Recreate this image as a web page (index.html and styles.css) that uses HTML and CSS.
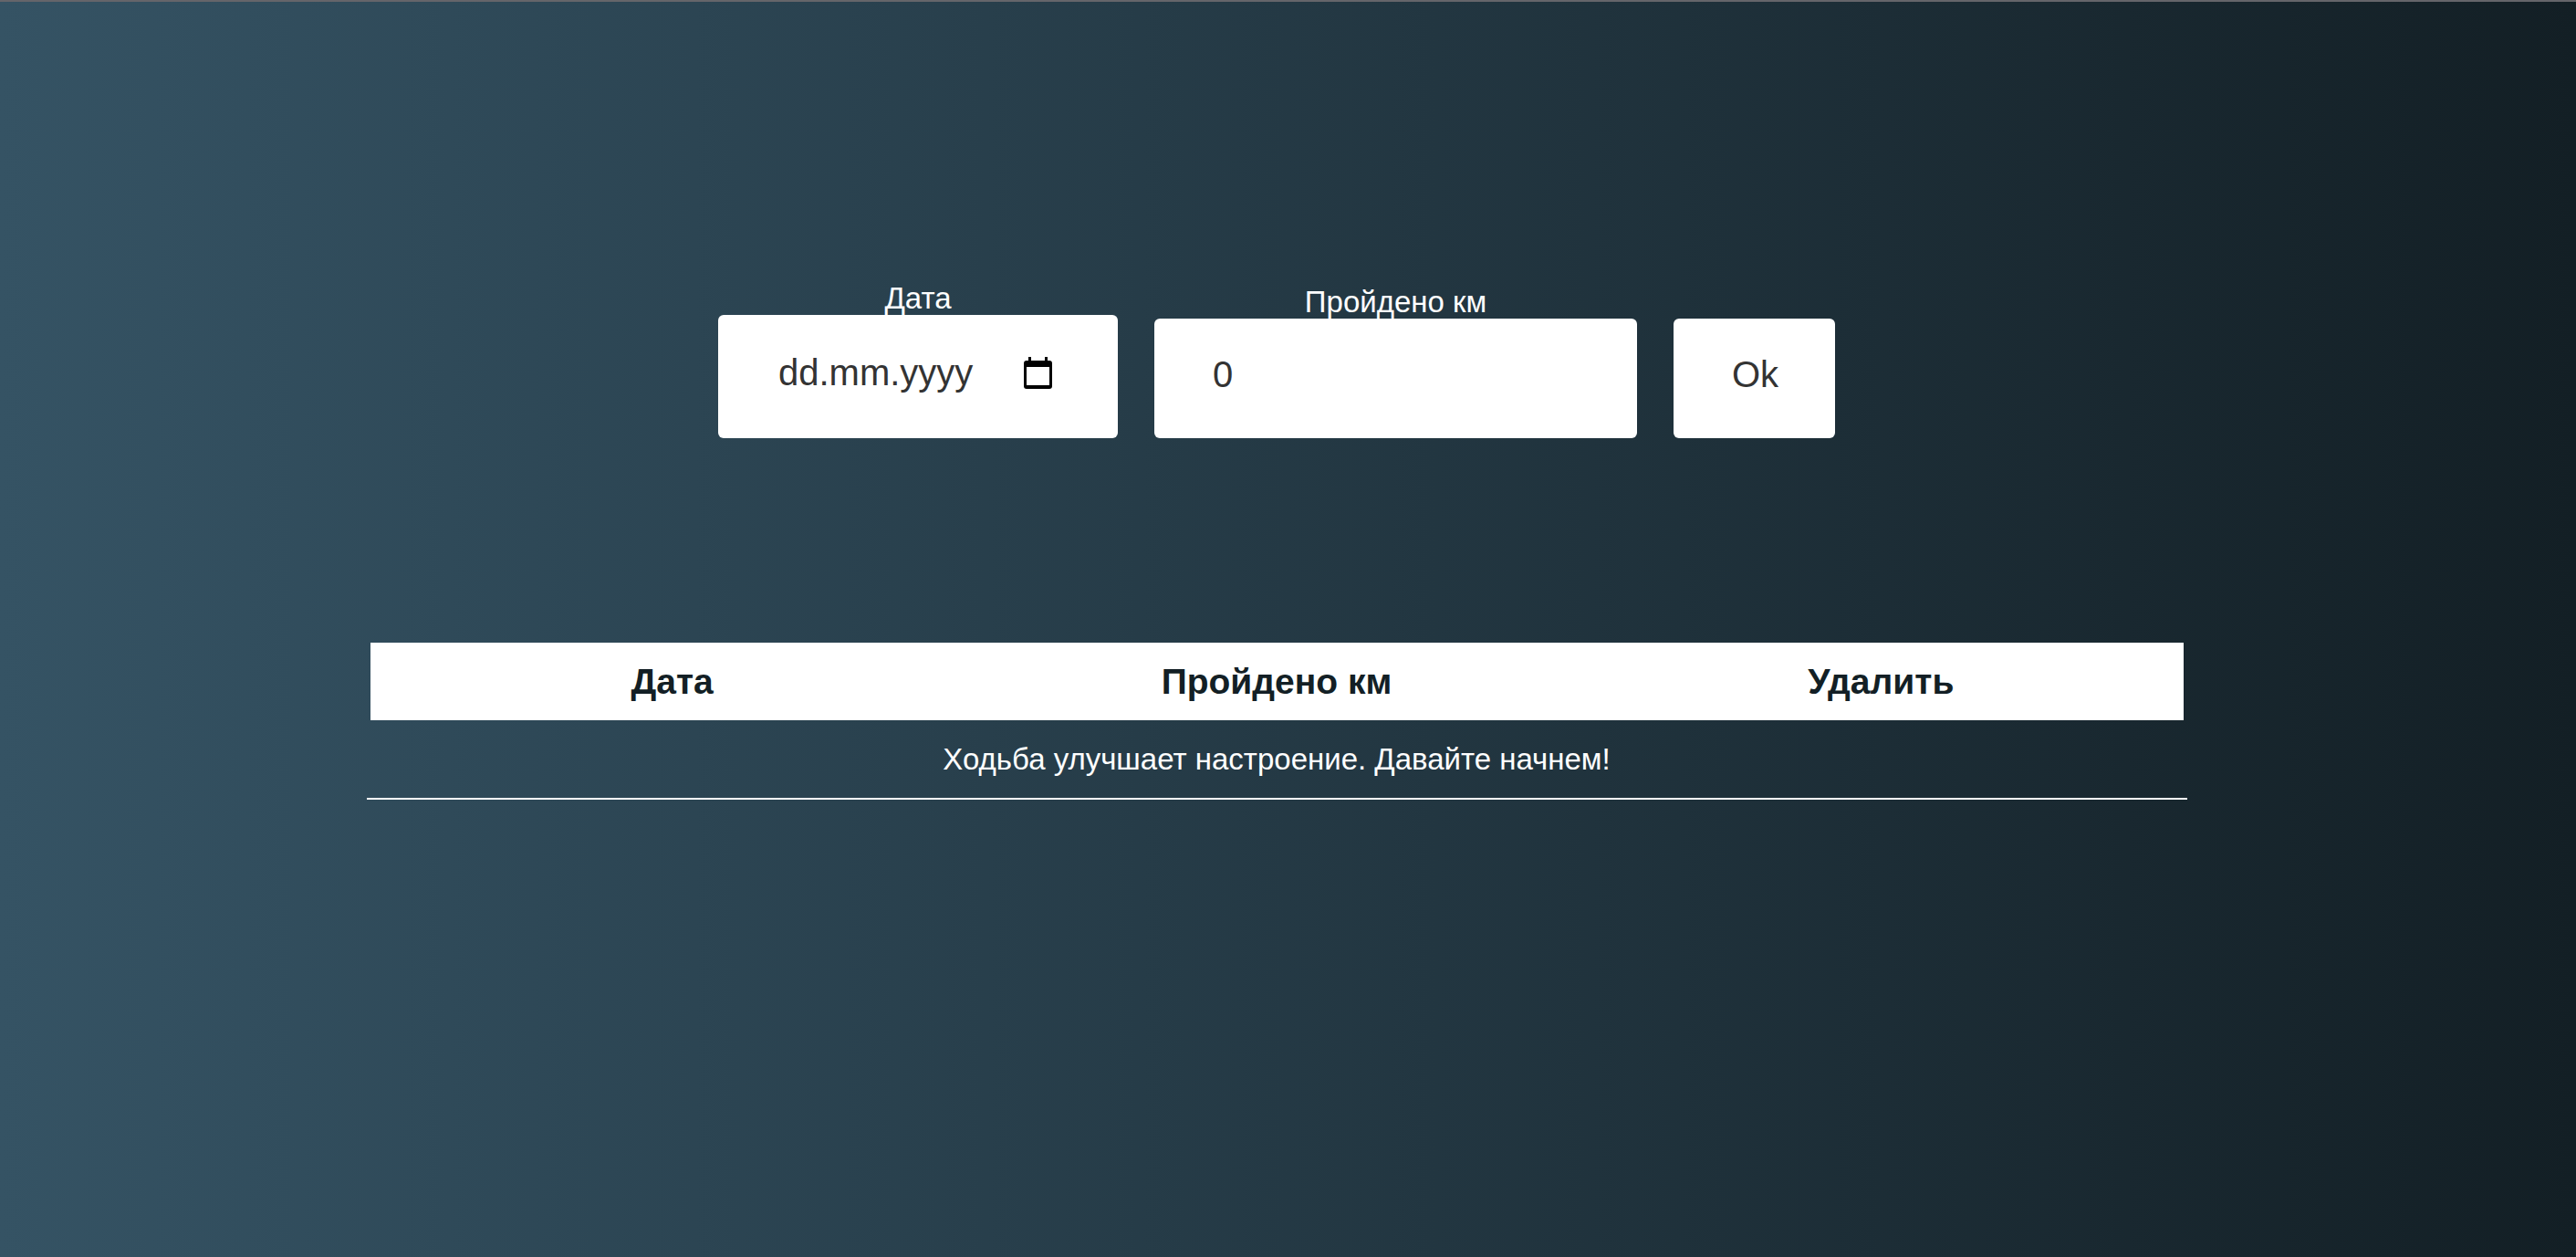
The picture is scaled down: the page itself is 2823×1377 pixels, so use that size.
FILE: index.html
```html
<!DOCTYPE html>
<html lang="ru">
<head>
<meta charset="utf-8">
<meta name="viewport" content="width=device-width, initial-scale=1">
<title>Учёт тренировок</title>
<link rel="stylesheet" href="styles.css">
</head>
<body>
<main class="page">
  <form class="form">
    <div class="field field-date">
      <label class="label" for="date">Дата</label>
      <div class="control control-date">
        <input class="input input-date" id="date" type="text" inputmode="numeric" placeholder="dd.mm.yyyy">
        <button class="calendar" type="button" aria-label="Календарь">
          <svg class="calendar-icon" viewBox="0 0 31 35" aria-hidden="true">
            <path fill-rule="evenodd" d="M5 0h3v4h15V0h3v4h2a3 3 0 0 1 3 3v25a3 3 0 0 1-3 3H3a3 3 0 0 1-3-3V7a3 3 0 0 1 3-3h2zM3 11v20h25V11z"/>
          </svg>
        </button>
      </div>
    </div>
    <div class="field field-distance">
      <label class="label" for="distance">Пройдено км</label>
      <input class="control input" id="distance" type="text" inputmode="decimal" value="0">
    </div>
    <button class="control submit" type="submit">Ok</button>
  </form>
  <table class="table">
    <thead>
      <tr class="head-row">
        <th>Дата</th>
        <th>Пройдено км</th>
        <th>Удалить</th>
      </tr>
    </thead>
    <tbody>
      <tr>
        <td colspan="3">Ходьба улучшает настроение. Давайте начнем!</td>
      </tr>
    </tbody>
  </table>
</main>
</body>
</html>
```
FILE: styles.css
```css
* {
  box-sizing: border-box;
}

body {
  margin: 0;
  min-height: 100vh;
  border-top: 2px solid #65656a;
  background: linear-gradient(90deg, #355364, #131f25);
  color: #fff;
  font-family: "Liberation Sans", Arial, sans-serif;
  font-size: 33px;
  line-height: 37px;
}

.page {
  display: flex;
  flex-direction: column;
  align-items: center;
  gap: 220px;
  padding: 306px 25px 40px 0;
}

.form {
  display: flex;
  align-items: flex-end;
  justify-content: center;
  gap: 40px;
}

.field {
  display: flex;
  flex-direction: column;
}

.field-date {
  width: 438px;
}

.field-distance {
  width: 529px;
}

.label {
  text-align: center;
}

.control {
  padding: 38px 64px 47px;
  border: 0;
  border-radius: 6px;
  background: #fff;
}

.control-date {
  display: flex;
  align-items: center;
  justify-content: space-between;
  padding: 40px 72px 49px 66px;
}

.input,
.submit {
  color: #333;
  font-family: inherit;
  font-size: 40px;
  line-height: 46px;
}

.input {
  width: 100%;
  height: auto;
  outline: 0;
}

.input-date {
  width: 220px;
  height: 46px;
  padding: 0;
  border: 0;
  background: none;
}

.input::placeholder {
  color: #333;
  opacity: 1;
}

.submit {
  width: 177px;
  cursor: pointer;
}

.calendar {
  display: flex;
  padding: 0;
  border: 0;
  background: none;
  cursor: pointer;
}

.calendar-icon {
  width: 31px;
  height: 35px;
  fill: #000;
}

.table {
  width: 100%;
  max-width: 1995px;
  padding: 0 4px;
  table-layout: fixed;
  border-collapse: separate;
  border-spacing: 0 4px;
  border-bottom: 2px solid #fff;
  text-align: center;
}

.head-row {
  background: #fff;
  color: #131f25;
  font-size: 39px;
  line-height: 45px;
}

th,
td {
  padding: 20px;
}
```
